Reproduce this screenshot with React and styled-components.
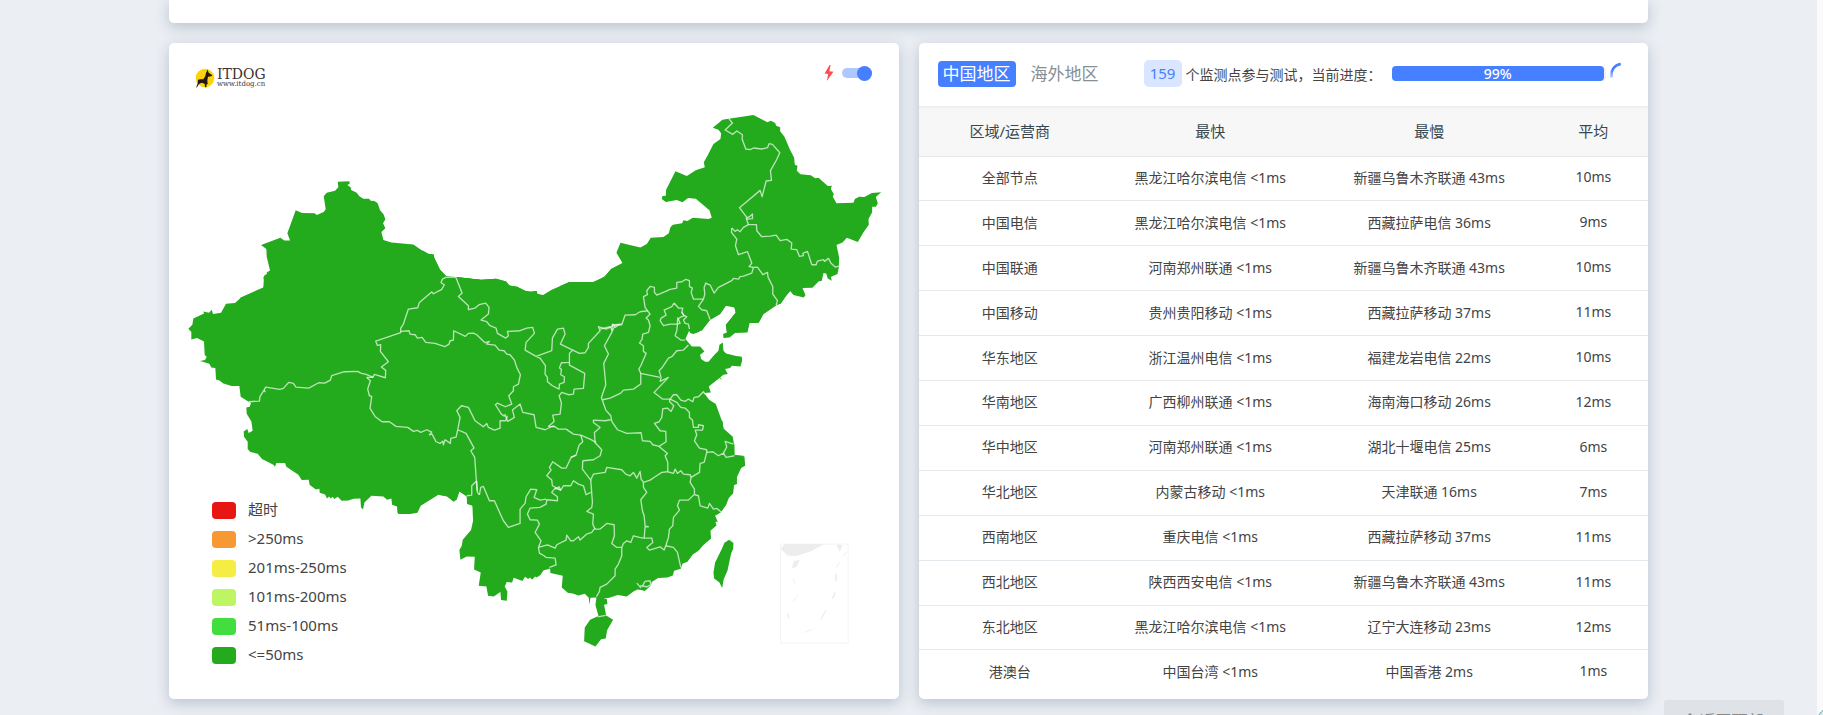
import { useState } from "react";
import styled, { createGlobalStyle } from "styled-components";

const NIVEIS = [
  { cor: "#e81613", texto: "超时" },
  { cor: "#f89833", texto: ">250ms" },
  { cor: "#f6ed44", texto: "201ms-250ms" },
  { cor: "#bef663", texto: "101ms-200ms" },
  { cor: "#42dd3f", texto: "51ms-100ms" },
  { cor: "#24aa1d", texto: "<=50ms" },
];

const LINHAS = [
  ["全部节点", "黑龙江哈尔滨电信 <1ms", "新疆乌鲁木齐联通 43ms", "10ms"],
  ["中国电信", "黑龙江哈尔滨电信 <1ms", "西藏拉萨电信 36ms", "9ms"],
  ["中国联通", "河南郑州联通 <1ms", "新疆乌鲁木齐联通 43ms", "10ms"],
  ["中国移动", "贵州贵阳移动 <1ms", "西藏拉萨移动 37ms", "11ms"],
  ["华东地区", "浙江温州电信 <1ms", "福建龙岩电信 22ms", "10ms"],
  ["华南地区", "广西柳州联通 <1ms", "海南海口移动 26ms", "12ms"],
  ["华中地区", "河南郑州联通 <1ms", "湖北十堰电信 25ms", "6ms"],
  ["华北地区", "内蒙古移动 <1ms", "天津联通 16ms", "7ms"],
  ["西南地区", "重庆电信 <1ms", "西藏拉萨移动 37ms", "11ms"],
  ["西北地区", "陕西西安电信 <1ms", "新疆乌鲁木齐联通 43ms", "11ms"],
  ["东北地区", "黑龙江哈尔滨电信 <1ms", "辽宁大连移动 23ms", "12ms"],
  ["港澳台", "中国台湾 <1ms", "中国香港 2ms", "1ms"],
];

// each zone has its own origin, the land shapes overlap on the inside
const ZONAS = [
  {
    nome: "xinjiang",
    origem: "480 0",
    terra: [
      "241,1100 241,891 310,861 314,848 310,829 322,824 320,815 330,809 320,768 319,745 303,733 361,711 373,719 390,719 382,698 407,629 426,637 464,638 470,643 491,634 497,626 491,587 500,576 525,570 535,560 533,543 568,542 569,549 562,553 574,562 572,567 590,576 598,587 610,594 627,594 632,600 643,601 653,608 660,629 670,640 676,656 669,668 676,683 664,694 670,718 694,725 760,731 800,759 821,761 823,771 840,807 857,825 856,831 886,829 962,837 1008,834 1038,842 1048,854 1071,858 1095,870 1111,873 1130,871 1132,880 1140,881 1140,1100",
    ],
    divisas: [],
  },
  {
    nome: "tibet",
    origem: "540 810",
    terra: [
      "270,0 260,10 252,15 250,50 183,80 165,97 138,99 123,126 99,130 95,117 87,126 70,122 72,128 40,143 37,162 25,174 34,184 34,206 51,202 72,212 74,252 80,259 75,268 60,271 88,279 94,290 106,292 108,326 118,329 130,338 155,346 178,346 182,378 206,393 213,397 209,408 199,410 200,429 214,452 218,480 206,487 202,475 191,482 192,498 203,513 203,535 211,544 233,549 246,565 280,582 285,588 289,577 315,577 319,588 355,612 365,628 386,627 389,643 408,656 418,654 419,666 435,671 441,683 447,677 452,683 458,678 463,685 473,678 485,690 505,689 520,684 541,683 543,710 549,716 553,695 574,675 610,677 621,687 634,683 636,702 651,707 652,725 655,730 690,730 712,726 722,705 775,672 801,677 820,692 830,687 838,662 860,677 861,700 878,705 880,720 900,720 900,27 827,19 797,21 780,0",
    ],
    divisas: [
      "206,393 238,391 240,377 252,358 257,349 299,356 310,353 326,335 340,338 348,349 386,352 416,336 434,337 451,328 455,315 493,303 533,302 542,307 558,311 580,320",
      "252,358 256,364",
      "560,320 578,320 583,311 616,321 617,299 604,289 625,273 601,242 602,222 592,224 587,211 662,186",
      "662,186 662,172 670,160 685,115 713,111 718,95 755,64 760,69 785,56 793,42 783,36 787,25 797,20 827,19",
      "560,320 571,330 563,355 568,375 575,377 570,413 585,437 606,453 628,453 648,467 683,470 700,482 712,479 722,485 740,477 755,484 748,492 756,490 768,513 780,518 788,511 790,522 795,507 811,518 812,503 828,499 833,477",
    ],
  },
  {
    nome: "gansu",
    origem: "1080 750",
    terra: [
      "0,0 190,0 205,9 220,11 222,22 240,57 258,76 287,79 362,87 408,84 438,92 448,104 471,108 495,120 511,123 530,121 532,130 549,133 575,117 628,94 700,94 732,80 753,55 780,41 780,720 0,720",
    ],
    divisas: [
      "293,537 318,548 342,592 332,600 344,620 351,720",
      "293,537 300,500 290,480 304,465 325,470 345,510 370,528 380,518 385,530 403,538 420,532 420,510 437,510 442,495",
      "122,242 147,240 150,250 165,252 172,262 186,260 197,275 225,278 254,288 267,280 270,270 280,268 281,240 316,257 325,248 340,247 350,252 375,276 388,272 380,280 405,283 417,298 432,300 440,310 450,312 463,328 470,350 481,372 475,400 460,408 460,420 446,435 455,460 436,468 412,457 406,462 424,490 434,497",
      "434,490 443,512 463,500 457,478 480,460 488,485 522,492 528,530 555,537 580,525",
      "287,79 306,127 295,137 325,165 325,177 345,172 357,162 377,157 387,170 385,190 363,208 380,213 390,225 408,232 412,248 437,262 445,255 442,242 480,240 500,232 518,230 523,248 498,275 495,298 528,317",
      "528,317 575,300 577,262 592,235 610,232 615,250 601,280 638,298 628,308 628,335 604,336 598,352 604,356 602,372 613,378 612,395 598,400 597,415 577,405 562,393 562,380 555,370 556,345 540,322 528,317",
      "638,298 658,308 675,306 685,290 685,278 720,240 715,228 738,235 755,228 758,220 765,230 780,220",
      "628,335 628,343 674,368 670,413 642,415 640,430 625,432 605,425 597,435 604,457 600,490 578,493 582,512 565,527 583,528",
      "580,525 595,535 618,535 640,550 662,553 690,565 708,575",
      "662,553 668,573 657,583 648,613 632,620",
    ],
  },
  {
    nome: "heilongjiang",
    origem: "1680 270",
    terra: [
      "0,586 28,574 100,574 132,559 153,535 187,517 169,486 181,456 241,470 260,460 272,441 310,439 326,428 331,410 338,402 366,398 370,389 382,391 398,381 445,385 455,381 448,359 407,324 384,322 367,335 350,328 317,334 305,325 307,316 317,315 318,297 346,242 380,256 407,239 434,230 431,215 442,195 460,160 481,145 483,128 475,117 458,111 487,87 506,84 580,73 622,95 632,90 645,97 648,105 660,110 660,122 673,138 690,178 702,201 704,222 712,225 710,240 721,251 752,254 765,263 775,261 803,286 815,285 812,295 821,310 818,318 829,338 880,336 884,325 897,318 913,319 935,307 963,305 947,319 953,338 947,348 936,348 936,365 925,385 926,402 910,425 893,454 860,441 847,455 829,463 837,500 836,530 832,550 812,559 815,570 803,563 798,548 790,547 785,570 775,572 757,591 727,592 736,613 731,620 700,613 690,601 678,615 662,638 650,643 610,670 595,697 568,697 562,720 500,720 497,704 527,665 523,650 497,645 480,670 450,688 425,720 0,720",
    ],
    divisas: [
      "506,84 517,97 495,118 518,131 530,121 547,132 546,145 557,175 570,177 580,172 605,175 622,171 627,159 637,161 659,186 649,208 631,240 634,269 618,271 606,318 600,299 538,351 560,380 560,385 577,384 577,370 568,378 558,382 565,402",
      "515,412 525,422 532,417 540,423 550,410 565,402 589,402 590,420 605,438 630,436 648,433 660,450 680,446 695,457 693,475 710,477 718,497 730,495 728,488 742,482 755,522 768,522 772,511 790,507 793,512 805,503 812,517 825,529 836,526",
      "515,412 514,425 530,445 526,465 535,492 562,483 575,517 567,528 580,530",
      "580,530 592,529 608,552 622,545 624,560 638,588 638,610 652,630 648,643",
      "580,530 575,547 550,556 540,558 535,565 520,563 515,570 475,590 462,607 450,583 437,577 432,590 434,610 430,625",
      "430,625 415,647 425,657 440,660 450,687",
      "430,625 400,625 393,605 397,592 388,588 388,570 377,566 365,573 350,575 350,592 330,596 315,603 290,613 283,605 283,590 270,587 260,600 262,612 250,618 255,650 262,660 240,663 225,672 195,673 185,702 165,703 157,720 150,708 120,715",
    ],
  },
  {
    nome: "hebei",
    origem: "1680 840",
    terra: [
      "0,20 30,4 104,4 132,-12 690,-12 690,31 678,45 662,68 650,72 610,100 595,127 568,127 562,155 525,157 508,170 490,172 489,160 500,155 497,132 527,95 523,80 515,75 497,75 480,100 440,122 418,153 400,160 390,157 387,150 376,175 395,197 420,197 433,212 420,222 423,235 435,243 445,243 463,222 475,210 478,192 488,185 490,210 498,218 528,226 545,228 546,240 541,257 515,255 510,262 495,265 503,280 490,282 480,290 488,299 478,292 446,317 452,335 432,337 447,357 467,370 487,425 490,443 518,468 521,487 523,523 553,527 555,555 543,562 530,590 531,600 0,600",
    ],
    divisas: [
      "262,90 270,100 258,112 265,118 270,135 265,155 248,160 246,175 238,187 250,195 250,212 258,218 242,255 236,265 242,278 300,290",
      "342,67 355,82 368,82 365,95 372,105 360,110 352,118 352,130 330,130 310,135 300,120 303,112 318,103 312,88 325,82 335,78 342,67",
      "365,95 372,105 380,108 370,118 375,128 385,130 388,145",
      "352,110 360,128 352,130 350,150 345,165 362,178 375,178",
      "385,193 370,208 350,210 335,228 325,232 305,262 297,270 303,290 300,302 325,290 282,335 307,355 330,355",
      "330,355 340,342 350,342 362,358 375,362 385,355 398,363 402,350 415,348 430,333 435,340",
      "242,278 242,310 220,325 190,328 182,337 150,352 128,357",
      "157,132 155,155 133,195 145,220 131,248 137,312 124,350 137,388 152,405 155,422 172,447 200,458 243,456 247,480 270,482 278,492 297,497",
      "157,132 165,132 185,130",
      "152,417 135,420 100,418 100,425 120,440 103,455 105,486 125,507 120,525 100,537 68,540",
      "330,355 328,362 341,375 333,392 322,382 308,384 305,410 297,423 283,428 300,450 317,452 318,483 297,497",
      "330,355 350,365 362,380 375,382 388,395 388,410 397,418 400,440 415,440 415,432 430,435 427,448 405,448 410,462 403,480 418,502 440,507",
      "440,515 458,513 475,525 490,517 498,530 523,525",
      "490,517 500,498 495,482 520,490",
      "440,507 440,515 432,545 420,548 418,575 393,590",
      "297,497 322,518 315,525 323,545 323,573",
    ],
  },
  {
    nome: "yunnan",
    origem: "1320 1260",
    terra: [
      "0,0 0,223 20,226 42,243 58,212 80,225 82,247 97,254 99,300 93,328 68,357 65,375 58,388 61,417 80,407 104,408 102,446 122,455 116,495 139,497 144,525 161,527 181,514 183,538 200,540 202,512 194,497 200,484 216,485 221,471 247,481 255,468 264,475 270,470 276,477 285,467 290,470 301,463 310,449 330,443 331,457 368,465 365,500 383,516 398,518 415,524 434,519 446,531 448,552 451,531 469,530 466,553 475,586 450,597 434,620 432,661 466,677 483,655 497,653 501,628 519,597 498,584 492,552 502,550 500,535 490,533 508,531 533,523 560,527 580,512 592,506 603,508 614,511 632,495 635,484 654,472 682,470 698,464 702,450 722,444 727,429 742,423 758,401 775,390 790,373 813,353 811,330 829,314 826,303 833,303 825,285 842,275 858,253 866,232 879,218 882,193 891,190 888,165 902,136 914,135 910,105 883,103 883,70 865,55 850,25 847,0",
      "867,357 880,367 879,385 873,398 862,450 851,475 846,502 838,485 822,473 820,455 825,425 845,385 853,366",
    ],
    divisas: [
      "110,180 112,215 118,222",
      "408,103 393,110 378,142 365,142 338,123 328,140 333,148 320,165 335,178 337,195 362,208",
      "428,120 427,145 452,178 460,160 495,155 500,140 545,147 557,160 570,165 580,155 590,172 600,152 603,175 610,185",
      "610,185 630,178 645,168 665,155 682,153",
      "682,153 700,158 705,145 712,158 722,150 730,160 750,162 753,170",
      "610,185 610,200 620,215 602,237 607,270 612,285 615,315 625,318 615,318 612,352",
      "753,170 750,185 763,205 763,220 745,238 718,238 712,255 718,268 700,290 698,315 688,325 685,350 677,375",
      "763,222 775,225 780,255 803,262 808,248 820,265 830,263 845,275",
      "610,352 635,352 638,365 620,380 628,388 660,378 672,388 677,375",
      "677,375 700,380 712,395 722,440",
      "610,352 598,350 580,345 572,365 560,360 550,368 545,380",
      "545,380 530,380 515,368 523,345 522,312 500,308 480,325 462,325",
      "545,380 545,405 535,430 525,445 525,465 500,490 480,500 478,512 469,528",
      "452,178 457,245 455,260 440,272 460,280 458,310 465,325",
      "452,215 438,222 430,195 415,190 400,180 392,195 370,195 362,208 357,198 345,205",
      "362,208 345,202 335,215 352,228 352,240 320,237 318,250 300,260 270,262 262,280 270,297 292,298 298,310 285,335 303,360 295,380",
      "108,182 95,195 95,223 80,225",
      "118,222 122,200 130,197 148,240 163,240 180,278 190,300 205,320 240,308 240,265 255,248 258,228 272,205 290,207 282,230 300,238 318,235",
      "295,380 322,372 345,382 350,372 378,358 380,343 392,360 400,360 415,348 420,358 440,340 455,335 462,325",
      "295,380 298,397 312,405 318,410 345,412 348,432 328,440",
      "590,487 603,502",
      "607,495 615,482 630,480 632,492 620,498 600,495",
      "473,588 497,584",
    ],
  },
];

export default function App() {
  const [aba, setAba] = useState("中国地区");
  const [ligado, setLigado] = useState(true);

  return (
    <Pagina>
      <GlobalStyle />
      <Conteudo>
        <CartaoTopo />
        <Colunas>
          <Cartao>
            <Mapa />
            <TopoMapa>
              <Logo />
              <Opcoes>
                <Raio />
                <Chave>
                  <input
                    type="checkbox"
                    role="switch"
                    aria-label="快速模式"
                    checked={ligado}
                    onChange={() => setLigado(!ligado)}
                  />
                  <span />
                </Chave>
              </Opcoes>
            </TopoMapa>
            <Legenda>
              {NIVEIS.map((nivel) => (
                <Nivel key={nivel.texto} $cor={nivel.cor}>
                  {nivel.texto}
                </Nivel>
              ))}
            </Legenda>
          </Cartao>

          <Cartao>
            <TopoTabela>
              {["中国地区", "海外地区"].map((nome) => (
                <Aba key={nome} $ativa={nome === aba} onClick={() => setAba(nome)}>
                  {nome}
                </Aba>
              ))}
              <Andamento>
                <Contador>159</Contador>
                <span>个监测点参与测试，当前进度：</span>
                <Barra role="progressbar" aria-valuenow={99}>
                  <Preenchido style={{ width: "99%" }}>99%</Preenchido>
                </Barra>
                <Carregando />
              </Andamento>
            </TopoTabela>
            <Tabela>
              <thead>
                <tr>
                  <th>区域/运营商</th>
                  <th>最快</th>
                  <th>最慢</th>
                  <th>平均</th>
                </tr>
              </thead>
              <tbody>
                {LINHAS.map((linha) => (
                  <tr key={linha[0]}>
                    {linha.map((celula, i) => (
                      <td key={i}>{celula}</td>
                    ))}
                  </tr>
                ))}
              </tbody>
            </Tabela>
          </Cartao>
        </Colunas>
      </Conteudo>
      <Rolagem />
      <VoltarTopo>
        <svg width="12" height="14" viewBox="0 0 12 14" fill="none" stroke="currentColor" strokeWidth="1.5">
          <path d="M6 13V1M1 6l5-5 5 5" />
        </svg>
        返回顶部
      </VoltarTopo>
      <Bolha />
    </Pagina>
  );
}

function Mapa() {
  return (
    <Desenho viewBox="507 127 2188 1968" aria-hidden="true">
      {ZONAS.map((zona) => (
        <g key={zona.nome} transform={`translate(${zona.origem})`} fill="#24aa1d">
          {zona.terra.map((pontos) => (
            <polygon key={pontos} points={pontos} />
          ))}
        </g>
      ))}
      {ZONAS.map((zona) => (
        <g
          key={zona.nome}
          transform={`translate(${zona.origem})`}
          fill="none"
          stroke="#fff"
          strokeOpacity="0.68"
          strokeWidth="4"
          strokeLinejoin="round"
        >
          {zona.divisas.map((pontos) => (
            <polyline key={pontos} points={pontos} />
          ))}
        </g>
      ))}
      <g transform="translate(2280 1560)" fill="#ededed">
        <rect x="61" y="70" width="203" height="297" fill="none" stroke="#f4f4f4" strokeWidth="3" />
        <path d="M75 70H192L155 91 107 106 82 104 61 83Z" />
        <path d="M229 72H247L239 93Z" />
        <path d="M101 121L119 118 109 139 95 142Z" />
        <path d="M225 160h5v21h-5zM222 215l6-1-7 18-7 3zM196 268l4-1-15 28-6 2zM79 276l5 1 4 16-4-1z" />
        <path
          d="M98 172l8 20M98 242l16-20M133 335l22-9M228 140l10-16M248 108l12-15"
          fill="none"
          stroke="#f1f1f1"
          strokeWidth="3"
        />
      </g>
    </Desenho>
  );
}

function Logo() {
  return (
    <Marca href="#">
      <svg width="20" height="20" viewBox="0 0 60 60">
        <circle cx="30" cy="30" r="28" fill="#fbd40b" />
        <path
          d="M37 4l4 10 11 8-3 3-10 1-2 11 1 11-4 2v8h-4l-1-11-9-3-8 4-7 11-1-2 4-11 1-11 7-1h9l6-10 2-10 3-5z"
          fill="#231815"
        />
      </svg>
      <Nome>
        ITDOG
        <small>www.itdog.cn</small>
      </Nome>
    </Marca>
  );
}

function Raio() {
  return (
    <svg width="10" height="16" viewBox="0 0 10 16">
      <path d="M5.6 0L0.6 8.4l3.6 0.6L2.8 16 9.4 6.8 5.4 6.2 6.6 0z" fill="#ff4d4f" />
    </svg>
  );
}

function Carregando() {
  return (
    <svg width="24" height="24" viewBox="0 0 24 24" fill="none">
      <defs>
        <linearGradient id="giro" x1="0" y1="1" x2="1" y2="0">
          <stop offset="0" stopColor="#467fff" stopOpacity="0.4" />
          <stop offset="0.3" stopColor="#467fff" />
        </linearGradient>
      </defs>
      <path d="M1.5 15.5C0.5 8 4.5 2.8 10.8 2" stroke="url(#giro)" strokeWidth="2.6" />
    </svg>
  );
}

const GlobalStyle = createGlobalStyle`
  * {
    box-sizing: border-box;
  }

  body {
    margin: 0;
    background-color: #ebeef3;
    color: #444444;
    font-family: "Noto Sans", "Noto Sans CJK SC", sans-serif;
    font-size: 14px;
    overflow: hidden;
  }

  button {
    font-family: inherit;
    border: none;
    cursor: pointer;
  }
`;

const Pagina = styled.div`
  min-height: 100vh;
  padding-right: 6px;
`;

const Conteudo = styled.main`
  width: 82%;
  max-width: 1479px;
  margin: 0 auto;
  display: flex;
  flex-direction: column;
  gap: 20px;
`;

const Cartao = styled.section`
  position: relative;
  background-color: #ffffff;
  border-radius: 5px;
  box-shadow: 0 4px 14px rgba(70, 95, 125, 0.3);
  overflow: hidden;
`;

const CartaoTopo = styled(Cartao)`
  height: 23px;
  border-radius: 0 0 5px 5px;
`;

const Colunas = styled.div`
  display: grid;
  grid-template-columns: 1fr 1fr;
  gap: 20px;
`;

const Desenho = styled.svg`
  display: block;
  width: 100%;
`;

const TopoMapa = styled.div`
  position: absolute;
  top: 20px;
  left: 26px;
  right: 27px;
  display: flex;
  justify-content: space-between;
  align-items: flex-start;
`;

const Marca = styled.a`
  display: flex;
  align-items: center;
  gap: 2px;
  padding-top: 5px;
  color: #3b3130;
  text-decoration: none;
`;

const Nome = styled.span`
  display: flex;
  flex-direction: column;
  font-family: "DejaVu Serif", serif;
  font-size: 14px;
  line-height: 13px;

  small {
    font-size: 7px;
    line-height: 7px;
  }
`;

const Opcoes = styled.div`
  display: flex;
  align-items: center;
  gap: 8px;
  padding-top: 2px;
`;

const Chave = styled.label`
  position: relative;
  display: flex;
  align-items: center;
  width: 30px;
  height: 16px;
  cursor: pointer;

  input {
    position: absolute;
    inset: 0;
    margin: 0;
    opacity: 0;
  }

  span {
    display: flex;
    align-items: center;
    justify-content: flex-end;
    width: 100%;
    height: 10px;
    border-radius: 5px;
    background-color: #adc7ff;
  }

  span::after {
    content: "";
    width: 15px;
    height: 15px;
    border-radius: 50%;
    background-color: #467fff;
  }

  input:not(:checked) + span {
    justify-content: flex-start;
  }
`;

const Legenda = styled.ul`
  position: absolute;
  left: 43px;
  bottom: 33px;
  margin: 0;
  padding: 0;
  display: flex;
  flex-direction: column;
  gap: 5px;
  list-style: none;
`;

const Nivel = styled.li`
  display: flex;
  align-items: center;
  gap: 12px;
  font-size: 15px;
  line-height: 24px;

  &::before {
    content: "";
    width: 24px;
    height: 17px;
    margin-top: 3px;
    border-radius: 4px;
    background-color: ${(props) => props.$cor};
  }
`;

const TopoTabela = styled.div`
  display: flex;
  align-items: center;
  gap: 10px;
  height: 65px;
  padding: 0 14px 2px 19px;
  border-bottom: 2px solid #edf1f5;
`;

const Aba = styled.button`
  height: 26px;
  padding: 0 5px;
  border-radius: 4px;
  font-size: 17px;
  line-height: 26px;
  white-space: nowrap;
  background-color: ${(props) => (props.$ativa ? "#467fff" : "transparent")};
  color: ${(props) => (props.$ativa ? "#ffffff" : "#868e96")};
`;

const Andamento = styled.div`
  flex: 1;
  display: flex;
  align-items: center;
  gap: 4px;
  margin-left: 30px;
  white-space: nowrap;
`;

const Contador = styled.span`
  width: 38px;
  border-radius: 5px;
  background-color: #dae5ff;
  color: #467fff;
  font-size: 15px;
  line-height: 27px;
  text-align: center;
`;

const Barra = styled.div`
  flex: 1;
  height: 15px;
  margin-left: 6px;
  border-radius: 4px;
  background-color: #f0f2f5;
`;

const Preenchido = styled.div`
  height: 100%;
  border-radius: 4px;
  background-color: #467fff;
  color: #ffffff;
  font-weight: 500;
  line-height: 15px;
  text-align: center;
`;

const Tabela = styled.table`
  width: 100%;
  height: 586px;
  table-layout: fixed;
  border-collapse: collapse;
  text-align: center;

  th {
    height: 48px;
    padding: 0 0 2px;
    background-color: #f7f7f7;
    color: #37474f;
    font-size: 15px;
    font-weight: normal;
  }

  th:nth-child(1) {
    width: 25%;
  }

  th:nth-child(2),
  th:nth-child(3) {
    width: 30%;
  }

  td {
    padding: 0 0 3px;
    border-top: 1px solid #e4e9ee;
  }
`;

const Rolagem = styled.div`
  position: fixed;
  top: 0;
  right: 0;
  bottom: 0;
  width: 6px;
  background-color: #fafafa;
`;

const VoltarTopo = styled.button`
  position: fixed;
  right: 39px;
  bottom: -25px;
  width: 120px;
  height: 40px;
  display: flex;
  align-items: center;
  justify-content: center;
  gap: 3px;
  border-radius: 3px;
  background-color: #dfe3e8;
  color: #888888;
  font-size: 16px;
`;

const Bolha = styled.div`
  position: fixed;
  right: -29px;
  bottom: -27px;
  width: 36px;
  height: 36px;
  border: 1px solid #4a9fb0;
  border-radius: 50%;
  background-color: #d5edf2;
`;
